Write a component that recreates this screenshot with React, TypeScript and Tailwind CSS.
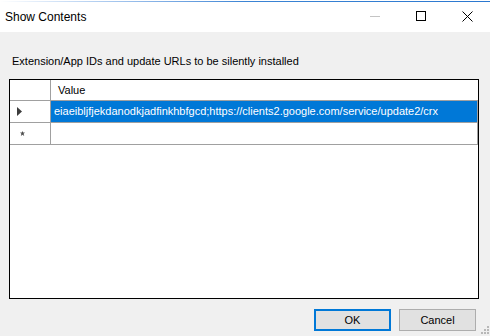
import React from 'react';

const ui = { fontFamily: '"Liberation Sans", Arial, sans-serif' };

const TitleBar: React.FC = () => (
  <div className="relative h-[32px] bg-white">
    <div className="absolute left-0 right-0 top-[1px] h-[1px] bg-gradient-to-r from-white via-[#3b84d4] to-[#2b78d0]" />
    <div className="flex h-full items-center">
      <span className="pl-[5px] pt-[2px] text-[12px] text-black">Show Contents</span>
      <div className="ml-auto flex h-full items-center">
        <div className="flex h-full w-[46px] items-center justify-center">
          <div className="h-[1px] w-[10px] bg-[#c4c4c4]" />
        </div>
        <div className="flex h-full w-[46px] items-center justify-center">
          <div className="h-[10px] w-[10px] border border-black" />
        </div>
        <div className="flex h-full w-[46px] items-center justify-center">
          <svg width="11" height="11" viewBox="0 0 11 11">
            <path d="M0.5 0.5 L10.5 10.5 M10.5 0.5 L0.5 10.5" stroke="#000" strokeWidth="1" />
          </svg>
        </div>
      </div>
    </div>
  </div>
);

const Grid: React.FC = () => (
  <div className="ml-[9px] h-[220px] w-[470px] border border-black bg-white">
    <div className="flex h-[21px] border-b border-[#a0a0a0]">
      <div className="w-[41px] border-r border-[#a0a0a0]" />
      <div className="flex flex-1 items-center pl-[7px] text-[11px] text-black">Value</div>
    </div>
    <div className="flex h-[22px] border-b border-[#a0a0a0]">
      <div className="flex w-[41px] items-center border-r border-[#a0a0a0] pl-[7px]">
        <svg width="5" height="9" viewBox="0 0 5 9">
          <path d="M0 0 L5 4.5 L0 9 Z" fill="#3c3c3c" />
        </svg>
      </div>
      <div className="flex flex-1 items-center border-r border-[#a0a0a0] bg-[#0078d7] pl-[3px] text-[11px] text-white">
        eiaeibljfjekdanodkjadfinkhbfgcd;https://clients2.google.com/service/update2/crx
      </div>
    </div>
    <div className="flex h-[22px] border-b border-[#a0a0a0]">
      <div className="flex w-[41px] items-center border-r border-[#a0a0a0] pl-[10px]">
        <svg width="5" height="5" viewBox="0 0 5 5">
          <path d="M2.5 0 L3.2 1.6 L5 1.6 L3.6 2.8 L4.2 5 L2.5 3.7 L0.8 5 L1.4 2.8 L0 1.6 L1.8 1.6 Z" fill="#505050" />
        </svg>
      </div>
      <div className="flex-1 border-r border-[#a0a0a0]" />
    </div>
  </div>
);

export default function App() {
  return (
    <div className="relative h-[336px] w-[490px] overflow-hidden bg-[#f0f0f0]" style={ui}>
      <TitleBar />
      <div className="pl-[12px] pt-[21px] h-[47px] text-[11px] text-black">
        Extension/App IDs and update URLs to be silently installed
      </div>
      <Grid />
      <div className="mt-[10px] flex justify-end gap-[8px] pr-[14px]">
        <button className="h-[22px] w-[77px] border-2 border-[#0078d7] bg-[#e1e1e1] text-[11px] text-black">OK</button>
        <button className="h-[22px] w-[77px] border border-[#adadad] bg-[#e1e1e1] text-[11px] text-black">Cancel</button>
      </div>
      <svg className="absolute bottom-0 right-0" width="12" height="12" viewBox="0 0 12 12">
        <rect x="9" y="2" width="2" height="2" fill="#b8b8b8" />
        <rect x="6" y="5" width="2" height="2" fill="#b8b8b8" />
        <rect x="9" y="5" width="2" height="2" fill="#b8b8b8" />
        <rect x="3" y="8" width="2" height="2" fill="#b8b8b8" />
        <rect x="6" y="8" width="2" height="2" fill="#b8b8b8" />
        <rect x="9" y="8" width="2" height="2" fill="#b8b8b8" />
      </svg>
    </div>
  );
}
